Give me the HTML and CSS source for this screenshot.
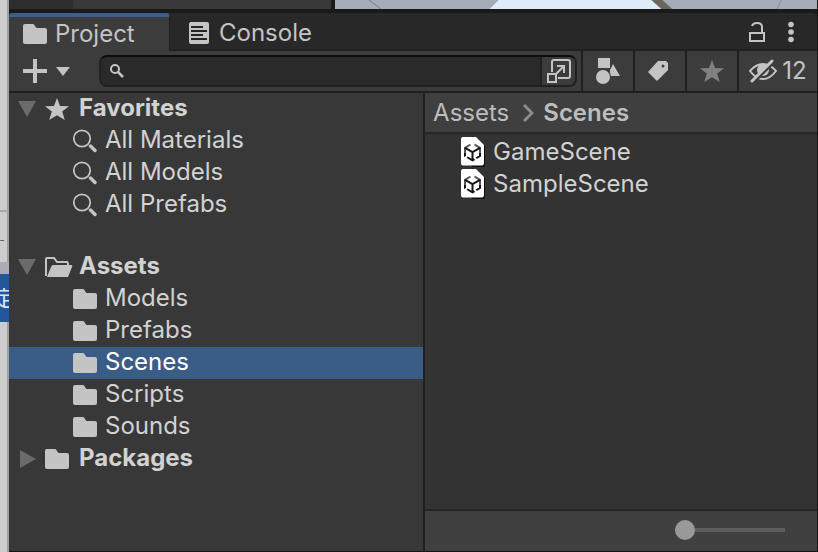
FILE: index.html
```
<!DOCTYPE html>
<html lang="en">
<head>
<meta charset="utf-8">
<title>Project</title>
<link rel="stylesheet" href="styles.css">
</head>
<body>
<svg class="defs" aria-hidden="true">
  <symbol id="folder" viewBox="0 0 24 20"><path d="M0 2Q0 0 2 0H10.500L13.500 4H22Q24 4 24 6V18Q24 20 22 20H2Q0 20 0 18Z" fill="currentColor"/></symbol>
  <symbol id="star" viewBox="0 0 24 22"><path d="M12 0L15 8L24 8.300L17.200 13.500L19.800 22L12 17.200L4.200 22L6.800 13.500L0 8.300L9 8Z" fill="currentColor"/></symbol>
  <symbol id="lens" viewBox="0 0 24 24"><circle cx="9" cy="9.500" r="8.200" fill="none" stroke="currentColor" stroke-width="1.700"/><path d="M17.500 17L22 21.500" stroke="currentColor" stroke-width="3.400" stroke-linecap="round"/></symbol>
  <symbol id="scene" viewBox="0 0 26 32">
    <path d="M4 2H17L25 10V29Q25 31 23 31H12Z" fill="#0c0c0c"/>
    <path d="M1 3Q1 1 3 1H16L24 9V27Q24 29.500 22 29.500H3Q1 29.500 1 27.500Z" fill="#fff"/>
    <path d="M10.500 8.500L5 11.800V16.500M14.500 8.500L20 11.800V16.500" fill="none" stroke="#555" stroke-width="2"/>
    <path d="M5 11.800L12.500 16L20 11.800M12.500 16V24" fill="none" stroke="#151515" stroke-width="2"/>
    <path d="M5 16.500V20L12.500 24.300L20 20V16.500" fill="none" stroke="#151515" stroke-width="2" stroke-dasharray="4 2 8.500 2 9"/>
  </symbol>
</svg>

<aside class="behind" aria-hidden="true">
  <div class="behind-page"></div>
  <div class="behind-field">–</div>
  <div class="behind-gap"></div>
  <div class="behind-button">定</div>
  <div class="behind-rest"></div>
</aside>

<div class="editor">
  <div class="above" aria-hidden="true">
    <div class="above-dark"></div>
    <div class="above-panel"></div>
    <svg class="scene-view" viewBox="0 0 483 9" preserveAspectRatio="none">
      <path d="M0 0H483V9H0Z" fill="#a5adb7"/>
      <path d="M34 0L46 9" stroke="#747b84"/>
      <path d="M164 0H319L329 9H155Z" fill="#e0ebfa"/>
      <path d="M317 0H328L338 9H327Z" fill="#6b655f"/>
      <path d="M447 0L443 9" stroke="#858c95"/>
    </svg>
  </div>

  <header class="tabs">
    <button class="tab active"><svg width="24" height="20"><use href="#folder"/></svg>Project</button>
    <button class="tab"><svg width="20" height="22" viewBox="0 0 20 22"><rect width="20" height="22" rx="2" fill="currentColor"/><path d="M2 5H14M2 9H18M2 13H14M2 17H18" stroke="#242424" stroke-width="2"/></svg>Console</button>
    <button class="plain lock" aria-label="Lock"><svg width="16" height="20" viewBox="0 0 16 20" fill="none" stroke="currentColor" stroke-width="2"><path d="M1 11H15V19H1ZM13 11V5Q13 1 8 1Q4 1 3 4"/></svg></button>
    <button class="plain" aria-label="More"><svg width="6" height="22" viewBox="0 0 6 22" fill="currentColor"><circle cx="3" cy="3.500" r="2.800"/><circle cx="3" cy="11" r="2.800"/><circle cx="3" cy="18.500" r="2.800"/></svg></button>
  </header>

  <div class="toolbar">
    <button class="plain add" aria-label="Create">
      <svg width="48" height="24" viewBox="0 0 48 24"><path d="M12 0V24M0 12H24" stroke="currentColor" stroke-width="4"/><path d="M33 8H47L40 17Z" fill="currentColor"/></svg>
    </button>
    <div class="search">
      <svg width="16" height="16" viewBox="0 0 16 16" fill="none" stroke="currentColor" stroke-width="2"><circle cx="6" cy="6" r="4"/><path d="M9 9L14 14" stroke-width="2.500"/></svg>
      <input type="text" aria-label="Search">
      <button class="plain popout" aria-label="Open in search"><svg width="24" height="24" viewBox="0 0 24 24" fill="none" stroke="currentColor" stroke-width="2"><path d="M5 13V3Q5 1 7 1H21Q23 1 23 3V17Q23 19 21 19H11"/><path d="M1 15H9V23H1ZM9 15L17 7M10 7H17V14"/></svg></button>
    </div>
    <button class="tool" aria-label="Search by type"><svg width="24" height="26" viewBox="0 0 24 26"><path d="M2 0H14V10H2ZM17 6L24 18H14V12Z" fill="currentColor"/><circle cx="7" cy="19" r="8" fill="#3c3c3c"/><circle cx="7" cy="19" r="7" fill="currentColor"/></svg></button>
    <button class="tool label" aria-label="Search by label"><svg width="20" height="20" viewBox="0 0 20 20"><path fill-rule="evenodd" d="M10 0H18L20 2V9L9 20L0 11ZM15 3.500A1.500 1.500 0 1 0 15 6.500A1.500 1.500 0 1 0 15 3.500Z" fill="currentColor"/></svg></button>
    <button class="tool dim" aria-label="Save search"><svg width="24" height="22"><use href="#star"/></svg></button>
    <button class="tool hidden-count" aria-label="Hidden packages 12"><svg width="28" height="24" viewBox="0 0 28 24" fill="none" stroke="currentColor"><path d="M1 12Q7 5 14 5T27 12Q21 20 14 20T1 12Z" stroke-width="2"/><circle cx="14" cy="11" r="6" fill="currentColor" stroke="none"/><path d="M5 23L25 3" stroke="#3c3c3c" stroke-width="3"/><path d="M3 22L23 2" stroke-width="3" stroke-linecap="round"/></svg>12</button>
  </div>

  <main class="panes">
    <nav class="tree" aria-label="Folders">
      <button class="row root"><svg class="arrow" width="18" height="16" viewBox="0 0 18 16"><path d="M0 0H18L9 16Z" fill="currentColor"/></svg><svg class="icon" width="24" height="22"><use href="#star"/></svg>Favorites</button>
      <button class="row"><svg class="icon" width="24" height="24"><use href="#lens"/></svg>All Materials</button>
      <button class="row"><svg class="icon" width="24" height="24"><use href="#lens"/></svg>All Models</button>
      <button class="row"><svg class="icon" width="24" height="24"><use href="#lens"/></svg>All Prefabs</button>
      <button class="row root group"><svg class="arrow" width="18" height="16" viewBox="0 0 18 16"><path d="M0 0H18L9 16Z" fill="currentColor"/></svg><svg class="icon wide" width="28" height="20" viewBox="0 0 28 20"><path d="M1 19V2Q1 1 2 1H9L12 5H22Q23 5 23 8" fill="none" stroke="currentColor" stroke-width="2"/><path d="M8 8H26Q28 8 27 10L23 20H2L6 10Q7 8 8 8Z" fill="currentColor"/></svg>Assets</button>
      <button class="row"><svg class="icon" width="24" height="20"><use href="#folder"/></svg>Models</button>
      <button class="row"><svg class="icon" width="24" height="20"><use href="#folder"/></svg>Prefabs</button>
      <button class="row selected"><svg class="icon" width="24" height="20"><use href="#folder"/></svg>Scenes</button>
      <button class="row"><svg class="icon" width="24" height="20"><use href="#folder"/></svg>Scripts</button>
      <button class="row"><svg class="icon" width="24" height="20"><use href="#folder"/></svg>Sounds</button>
      <button class="row root"><svg class="arrow" width="18" height="18" viewBox="0 0 18 18"><path d="M2 0L18 9L2 18Z" fill="currentColor"/></svg><svg class="icon" width="24" height="20"><use href="#folder"/></svg>Packages</button>
    </nav>

    <section class="content">
      <div class="crumbs">
        <a href="#assets">Assets</a>
        <svg width="12" height="18" viewBox="0 0 12 18"><path d="M2 1L10 9L2 17" fill="none" stroke="#8c8c8c" stroke-width="3"/></svg>
        <a href="#scenes" class="current">Scenes</a>
      </div>
      <div class="files">
        <button class="row file"><svg width="26" height="32"><use href="#scene"/></svg>GameScene</button>
        <button class="row file"><svg width="26" height="32"><use href="#scene"/></svg>SampleScene</button>
      </div>
      <footer class="status"><input type="range" min="0" max="100" value="0" aria-label="Icon size"></footer>
    </section>
  </main>
</div>
</body>
</html>
```
FILE: styles.css
```
* { box-sizing: border-box; }

body {
  margin: 0;
  display: flex;
  min-height: 100vh;
  background: #1f1f1f;
  color: #d2d2d2;
  font: 24px/32px Inter, "Noto Sans CJK JP", sans-serif;
}

svg { display: block; flex: none; }
.defs { position: absolute; width: 0; height: 0; }

button {
  margin: 0;
  padding: 0;
  border: 0;
  background: none;
  color: inherit;
  font: inherit;
  display: flex;
  align-items: center;
}

/* Strip of the window that lies behind the editor */
.behind {
  width: 9px;
  flex: none;
  display: flex;
  flex-direction: column;
  overflow: hidden;
  background: linear-gradient(to right, #cdcdcd 7px, #a0a0a0 7px);
}
.behind-page { height: 212px; border-bottom: 2px solid #a9a9b4; }
.behind-field { height: 50px; line-height: 56px; font-size: 8px; color: #333; }
.behind-gap { height: 12px; background: #abacb6; }
.behind-button { height: 48px; background: #22579c; color: #dce6f2; line-height: 48px; text-indent: -7px; font-size: 22px; white-space: nowrap; }
.behind-rest { flex: 1; }

.editor {
  flex: 1;
  min-width: 0;
  display: flex;
  flex-direction: column;
  border-right: 1px solid #161616;
  border-bottom: 1px solid #161616;
}

.above {
  height: 13px;
  display: flex;
  border-bottom: 4px solid #1a1a1a;
}
.above-dark { width: 64px; background: #2d2d2d; }
.above-panel { width: 262px; background: #383838; border-right: 4px solid #1a1a1a; }
.scene-view { flex: 1; width: 0; height: 9px; }

.tabs {
  height: 38px;
  display: flex;
  align-items: stretch;
  background: #282828;
  padding-right: 23px;
  color: #c4c4c4;
  box-shadow: inset 0 -2px #202020;
  border-top-right-radius: 6px;
}
.tab { gap: 10px; padding: 2px 19px 0; }
.tab.active {
  min-width: 161px;
  gap: 8px;
  padding: 0 14px;
  border-top: 4px solid #3a5f8a;
  border-right: 1px solid #202020;
  border-radius: 4px 4px 0 0;
  background: #3c3c3c;
}
.plain { justify-content: center; }
.lock { margin-left: auto; margin-right: 23px; }

.toolbar {
  height: 42px;
  display: flex;
  align-items: stretch;
  background: #3c3c3c;
  border-bottom: 2px solid #202020;
  color: #c4c4c4;
}
.add { width: 90px; padding-right: 14px; }
.search {
  flex: 1;
  min-width: 0;
  margin: 4px 4px 4px 0;
  display: flex;
  align-items: center;
  background: #2a2a2a;
  border: 2px solid #212121;
  border-top-color: #0d0d0d;
  border-radius: 8px;
  padding-left: 8px;
  overflow: hidden;
}
.search input {
  flex: 1;
  min-width: 0;
  margin: 0 0 0 8px;
  padding: 0;
  border: 0;
  background: none;
  color: inherit;
  font: inherit;
}
.popout { width: 35px; height: 28px; background: #3c3c3c; border-left: 2px solid #212121; }
.tool { width: 52px; justify-content: center; border-left: 2px solid #202020; }
.label { padding-right: 4px; }
.dim { color: #808080; }
.hidden-count { width: 80px; gap: 5px; }

.panes { flex: 1; display: flex; }

.tree {
  flex: 0 0 51.500%;
  background: #383838;
  border-right: 2px solid #202020;
}
.row { width: 100%; height: 32px; padding-left: 64px; text-align: left; padding-bottom: 2px; }
.row .icon { margin-right: 8px; position: relative; top: 1px; color: #c4c4c4; }
.row.root { padding-left: 9px; font-weight: 700; }
.row .arrow { color: #6b6b6b; margin-right: 9px; position: relative; top: 1px; }
.row.root .icon { margin-right: 10px; }
.row.root .icon.wide { margin-right: 6px; }
.group { margin-top: 30px; }
.selected { background: #3a5d87; color: #fff; }

.content { flex: 1; min-width: 0; display: flex; flex-direction: column; background: #333; }
.crumbs {
  height: 41px;
  display: flex;
  align-items: center;
  gap: 13px;
  padding-left: 8px;
  background: #3f3f3f;
  border-bottom: 2px solid #262626;
}
.crumbs a { color: #bdbdbd; text-decoration: none; }
.crumbs .current { font-weight: 600; margin-left: -4px; }
.files { flex: 1; padding-top: 2px; }
.file { padding: 0 0 0 35px; gap: 7px; }

.status {
  height: 42px;
  display: flex;
  align-items: center;
  justify-content: flex-end;
  padding: 0 32px 2px 0;
  border-top: 2px solid #262626;
  background: #404040;
}
.status input { appearance: none; width: 110px; height: 20px; margin: 0; background: none; }
.status input::-webkit-slider-runnable-track { height: 4px; background: #5e5e5e; }
.status input::-webkit-slider-thumb { appearance: none; width: 20px; height: 20px; margin-top: -8px; border-radius: 50%; background: #999; }
```
